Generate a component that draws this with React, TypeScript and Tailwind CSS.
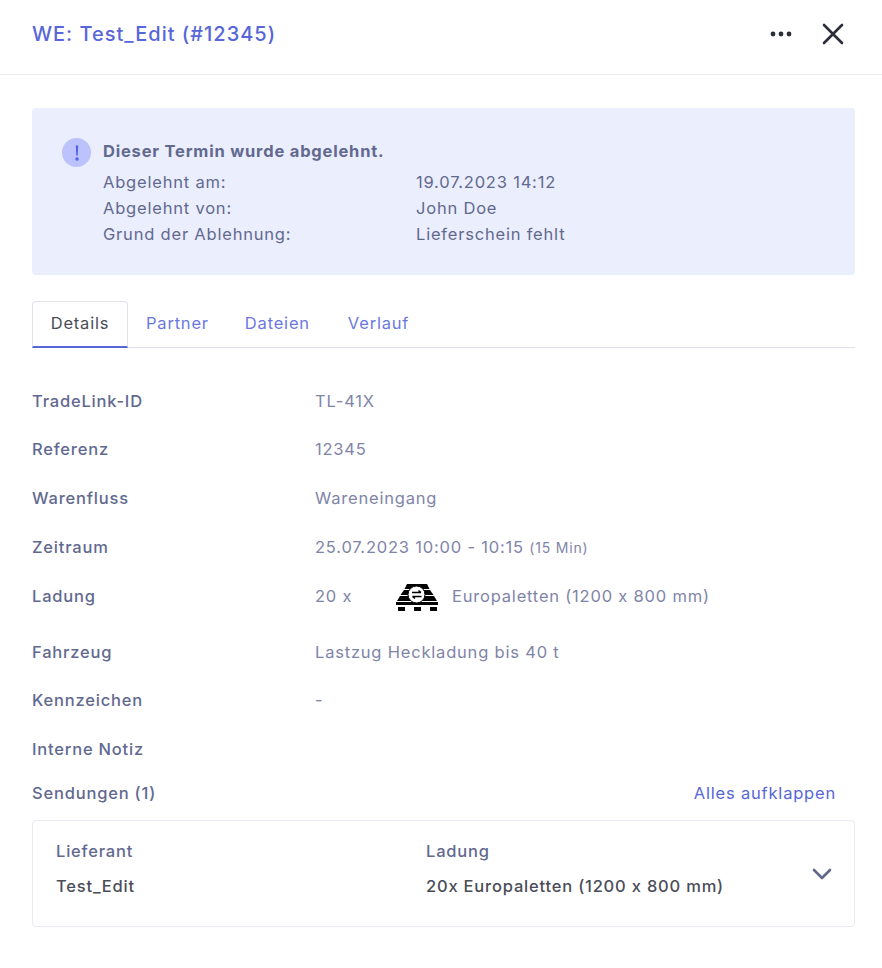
const rows: [string, React.ReactNode, string][] = [
  ["TradeLink-ID", "TL-41X", "h-[48px]"],
  ["Referenz", "12345", "h-[49px]"],
  ["Warenfluss", "Wareneingang", "h-[49px]"],
  ["Zeitraum", <span>25.07.2023 10:00 - 10:15 <span className="text-[14px]">(15 Min)</span></span>, "h-[49px]"],
];

function Pallet() {
  return (
    <svg width="42" height="27" viewBox="0 0 42 27" className="shrink-0 ml-[1px] mr-[1px] mt-[2px]">
      <path d="M11 0H31L33.5 5H8.5Z" fill="#000" />
      <path d="M8 6H34L37.5 11H4.5Z" fill="#000" />
      <path d="M4 12H38L41 17H1Z" fill="#000" />
      <rect x="0" y="18" width="42" height="3" fill="#000" />
      <rect x="2" y="23" width="7" height="4" fill="#000" />
      <rect x="18" y="23" width="7" height="4" fill="#000" />
      <rect x="34" y="23" width="7" height="4" fill="#000" />
      <circle cx="20.5" cy="10.5" r="8.5" fill="#fff" stroke="#000" strokeWidth="1" />
      <path d="M16 8.5H25M22.5 6.5L25 8.5M16.5 12.5H25.5M16.5 12.5L19 14.5" stroke="#000" strokeWidth="1.5" fill="none" />
    </svg>
  );
}

function Row({ label, children, h }: { label: string; children?: React.ReactNode; h: string }) {
  return (
    <div className={`flex items-center ${h}`}>
      <div className="w-[283px] shrink-0 font-medium text-[#62698f]">{label}</div>
      <div className="flex items-center text-[#7f85a8]">{children}</div>
    </div>
  );
}

export default function App() {
  return (
    <div className="w-[882px] h-[968px] bg-white text-[16.5px] tracking-[0.8px] font-['Inter',sans-serif] overflow-hidden">
      <header className="h-[75px] border-b border-[#e9eaf2] flex items-center justify-between pl-[32px] pr-[37px] pb-[6px]">
        <h1 className="text-[20px] font-medium text-[#5766d8] tracking-[1px]">WE: Test_Edit (#12345)</h1>
        <div className="flex items-center gap-[29px]">
          <svg width="22" height="6" viewBox="0 0 22 6"><circle cx="3" cy="3" r="2.4" fill="#2b2e3a" /><circle cx="11" cy="3" r="2.4" fill="#2b2e3a" /><circle cx="19" cy="3" r="2.4" fill="#2b2e3a" /></svg>
          <svg width="24" height="24" viewBox="0 0 24 24"><path d="M3 3L21 21M21 3L3 21" stroke="#2b2e3a" strokeWidth="2.6" strokeLinecap="round" /></svg>
        </div>
      </header>
      <main className="px-[32px] pt-[33px] pr-[27px]">
        <section className="h-[167px] bg-[#ebeefc] rounded-[4px] pl-[30px] pt-[30px] flex">
          <div className="w-[29px] h-[29px] rounded-full bg-[#bcc2fb] flex items-center justify-center shrink-0">
            <svg width="4" height="16" viewBox="0 0 4 16"><path d="M0.8 0.5H3.2L2.7 10.5H1.3Z" fill="#4f5ff0" /><circle cx="2" cy="14" r="1.7" fill="#4f5ff0" /></svg>
          </div>
          <div className="ml-[12px] text-[#62698f]">
            <div className="font-bold h-[26px] leading-[26px]">Dieser Termin wurde abgelehnt.</div>
            <div className="mt-[5px] grid grid-cols-[313px_auto] leading-[26px]">
              <span>Abgelehnt am:</span><span>19.07.2023 14:12</span>
              <span>Abgelehnt von:</span><span>John Doe</span>
              <span>Grund der Ablehnung:</span><span>Lieferschein fehlt</span>
            </div>
          </div>
        </section>
        <nav className="mt-[26px] h-[47px] border-b border-[#dfe1ec] flex items-end">
          <div className="w-[96px] h-[47px] -mb-px pb-[1px] border border-[#dfe1ec] border-b-2 border-b-[#5766d8] rounded-t-[4px] flex items-center justify-center text-[#4a4d57]">Details</div>
          <div className="h-[46px] flex items-center pb-[2px] ml-[18px] text-[#6b78e2]">Partner</div>
          <div className="h-[46px] flex items-center pb-[2px] ml-[36px] text-[#6b78e2]">Dateien</div>
          <div className="h-[46px] flex items-center pb-[2px] ml-[38px] text-[#6b78e2]">Verlauf</div>
        </nav>
        <div className="mt-[29px]">
          {rows.map(([l, v, h]) => <Row key={l} label={l} h={h}>{v}</Row>)}
          <Row label="Ladung" h="h-[49px]">
            <span className="w-[80px]">20 x</span>
            <Pallet />
            <span className="ml-[13px]">Europaletten (1200 x 800 mm)</span>
          </Row>
          <div className="h-[7px]" />
          <Row label="Fahrzeug" h="h-[48px]">Lastzug Heckladung bis 40 t</Row>
          <Row label="Kennzeichen" h="h-[48px]">-</Row>
          <Row label="Interne Notiz" h="h-[50px]" />
        </div>
        <div className="flex items-center justify-between h-[40px] pr-[19px] -mt-[1px]">
          <span className="font-medium text-[#62698f]">Sendungen (1)</span>
          <span className="text-[#5766d8]">Alles aufklappen</span>
        </div>
        <div className="mt-[7px] h-[107px] border border-[#e9eaf2] rounded-[4px] flex items-center pl-[23px] pr-[22px]">
          <div className="w-[370px] pb-[10px]">
            <div className="font-medium text-[#62698f] leading-[24px]">Lieferant</div>
            <div className="mt-[11px] font-medium text-[#4a4d57] leading-[24px]">Test_Edit</div>
          </div>
          <div className="flex-1 pb-[10px]">
            <div className="font-medium text-[#62698f] leading-[24px]">Ladung</div>
            <div className="mt-[11px] font-medium text-[#4a4d57] leading-[24px]">20x Europaletten (1200 x 800 mm)</div>
          </div>
          <svg width="20" height="12" viewBox="0 0 20 12"><path d="M2 2L10 10L18 2" fill="none" stroke="#62698f" strokeWidth="2.6" strokeLinecap="round" strokeLinejoin="round" /></svg>
        </div>
      </main>
    </div>
  );
}
